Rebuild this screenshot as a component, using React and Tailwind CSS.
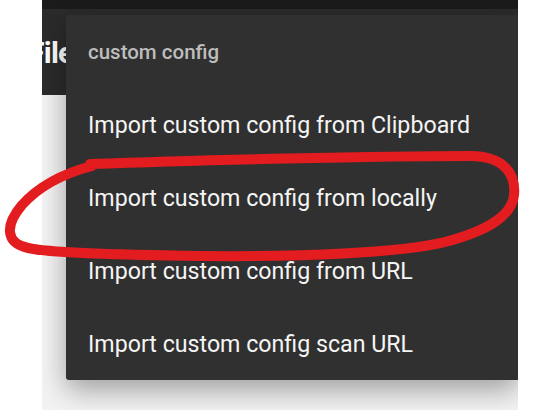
import React from "react";

const items = [
  "Import custom config from Clipboard",
  "Import custom config from locally",
  "Import custom config from URL",
  "Import custom config scan URL",
];

const App = () => {
  return (
    <div
      className="relative w-[549px] h-[410px] bg-white overflow-hidden flex"
      style={{ fontFamily: "Roboto, 'Noto Sans', sans-serif" }}
    >
      <div className="relative ml-[42px] w-[476px] h-full flex flex-col overflow-hidden">
        <div className="h-[9px] bg-[#1b1b1b]" />
        <div className="h-[86px] bg-[#2b2b2b] flex items-center overflow-hidden">
          <span className="-ml-[14px] text-[30px] font-bold text-white tracking-tight">File</span>
        </div>
        <div className="flex-1 bg-[#f3f3f3]" />

        {/* dropdown menu */}
        <div className="absolute left-[24px] top-[15px] w-[452px] h-[365px] bg-[#303030] rounded-l-[3px] shadow-[0_10px_28px_rgba(0,0,0,0.35)] flex flex-col">
          <div className="h-[73px] flex items-center pl-[22px] pt-[2px] text-[20.5px] font-medium text-[#bdbdbd]">
            custom config
          </div>
          {items.map((item, index) => (
            <div
              key={index}
              className="h-[73px] flex items-center pl-[22px] pt-[2px] text-[23.2px] text-[#f5f5f5]"
            >
              {item}
            </div>
          ))}
        </div>
      </div>

      {/* hand-drawn red loop */}
      <svg
        className="absolute inset-0 pointer-events-none"
        width="549"
        height="410"
        viewBox="0 0 549 410"
      >
        <path
          d="M 90 164 C 200 160, 380 156, 470 156 C 505 156, 516 175, 514 195 C 512 215, 490 230, 445 242 C 400 253, 300 257, 200 256 C 120 255, 50 253, 28 248 C 5 243, 5 225, 22 205 C 40 185, 65 173, 92 166"
          fill="none"
          stroke="#e31c1f"
          strokeWidth="10"
          strokeLinecap="round"
          strokeLinejoin="round"
        />
      </svg>
    </div>
  );
};

export default App;
